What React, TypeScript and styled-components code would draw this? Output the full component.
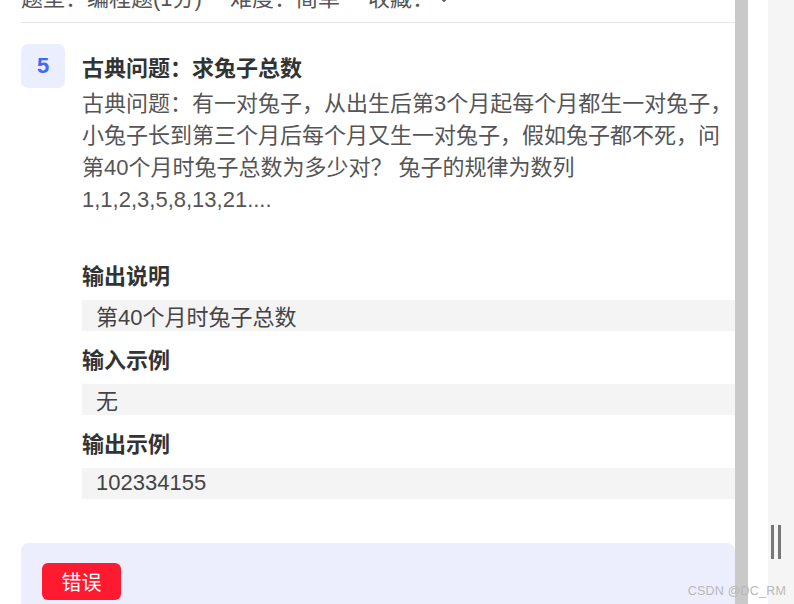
import React from "react"
import styled, { createGlobalStyle } from "styled-components"

const GlobalStyle = createGlobalStyle`
	html, body {
		margin: 0;
		padding: 0;
		background: #ffffff;
		overflow: hidden;
	}
	body {
		font-family: "Liberation Sans", "Noto Sans CJK SC", sans-serif;
	}
`

const Page = styled.div`
	position: relative;
	display: flex;
	width: 794px;
	height: 604px;
	overflow: hidden;
`

const Main = styled.div`
	width: 714px;
	padding-left: 21px;
	display: flex;
	flex-direction: column;
	flex-shrink: 0;

	& > * {
		flex-shrink: 0;
	}
`

const Header = styled.div`
	margin-top: -16px;
	height: 38px;
	border-bottom: 1px solid #e6e6e6;
	display: flex;
	align-items: flex-start;
	gap: 28px;
	font-size: 22px;
	line-height: 30px;
	color: #555555;
`

const Meta = styled.span`
	display: inline-flex;
	align-items: center;
	white-space: nowrap;
`

const Chevron = styled.svg`
	width: 14px;
	height: 14px;
	margin-left: 3px;
`

const Question = styled.div`
	display: flex;
	flex-direction: column;
	margin-top: 21px;
`

const TitleRow = styled.div`
	display: flex;
	align-items: center;
	gap: 17px;
	height: 44px;
`

const Badge = styled.div`
	width: 44px;
	height: 44px;
	border-radius: 7px;
	background: #ebeefe;
	color: #4169f5;
	font-weight: 700;
	font-size: 22px;
	display: flex;
	align-items: center;
	justify-content: center;
`

const Title = styled.div`
	font-size: 22px;
	font-weight: 700;
	color: #333333;
`

const Body = styled.div`
	padding-left: 61px;
	display: flex;
	flex-direction: column;
`

const Description = styled.div`
	font-size: 22px;
	line-height: 32px;
	color: #555555;
	margin-bottom: 45px;
`

const Label = styled.div<{ $first?: boolean }>`
	font-size: 22px;
	font-weight: 700;
	line-height: 32px;
	color: #333333;
	margin-top: ${(p) => (p.$first ? "0" : "14px")};
`

const Box = styled.div`
	margin-top: 7px;
	height: 31px;
	box-sizing: border-box;
	padding: 0 0 2px 14px;
	background: #f4f4f4;
	display: flex;
	align-items: center;
	font-size: 22px;
	color: #444444;
`

const Result = styled.div`
	margin-top: 44px;
	background: #eceefd;
	border-radius: 8px 8px 0 0;
	padding: 20px 21px;
	flex: 1 0 auto;
`

const ErrorButton = styled.button`
	width: 79px;
	height: 37px;
	border: none;
	border-radius: 6px;
	background: #ff1a2f;
	color: #ffffff;
	font-family: "Liberation Sans", "Noto Sans CJK SC", sans-serif;
	font-size: 20px;
	padding: 0;
`

const ScrollTrack = styled.div`
	width: 13px;
	flex-shrink: 0;
	background: #c9c9c9;
`

const Gap = styled.div`
	width: 20px;
	flex-shrink: 0;
	background: #ffffff;
`

const SidePanel = styled.div`
	width: 26px;
	flex-shrink: 0;
	background: #f5f5f5;
	display: flex;
	align-items: flex-end;
	padding-bottom: 45px;
	box-sizing: border-box;
`

const Handle = styled.div`
	display: flex;
	gap: 4px;
	margin-left: 3px;
`

const HandleBar = styled.div`
	width: 3px;
	height: 34px;
	background: #777777;
`

const Watermark = styled.div`
	position: absolute;
	right: 8px;
	bottom: 6px;
	font-size: 12.5px;
	color: #b8b8b8;
	font-family: "Liberation Sans", sans-serif;
	letter-spacing: 0.2px;
`

const sections = [
	{ label: "输出说明", value: "第40个月时兔子总数" },
	{ label: "输入示例", value: "无" },
	{ label: "输出示例", value: "102334155" },
]

const App: React.FC = () => {
	return (
		<>
			<GlobalStyle />
			<Page>
				<Main>
					<Header>
						<Meta>题型：编程题(1分)</Meta>
						<Meta>难度：简单</Meta>
						<Meta>
							收藏：
							<Chevron viewBox="0 0 24 24" fill="none" stroke="#555" strokeWidth="2.4" strokeLinecap="round" strokeLinejoin="round">
								<path d="M5 9l7 7 7-7" />
							</Chevron>
						</Meta>
					</Header>
					<Question>
						<TitleRow>
							<Badge>5</Badge>
							<Title>古典问题：求兔子总数</Title>
						</TitleRow>
						<Body>
							<Description>
								古典问题：有一对兔子，从出生后第3个月起每个月都生一对兔子，小兔子长到第三个月后每个月又生一对兔子，假如兔子都不死，问第40个月时兔子总数为多少对？ 兔子的规律为数列1,1,2,3,5,8,13,21....
							</Description>
							{sections.map((s, i) => (
								<React.Fragment key={s.label}>
									<Label $first={i === 0}>{s.label}</Label>
									<Box>{s.value}</Box>
								</React.Fragment>
							))}
						</Body>
					</Question>
					<Result>
						<ErrorButton>错误</ErrorButton>
					</Result>
				</Main>
				<ScrollTrack />
				<Gap />
				<SidePanel>
					<Handle>
						<HandleBar />
						<HandleBar />
					</Handle>
				</SidePanel>
				<Watermark>CSDN @DC_RM</Watermark>
			</Page>
		</>
	)
}

export default App
